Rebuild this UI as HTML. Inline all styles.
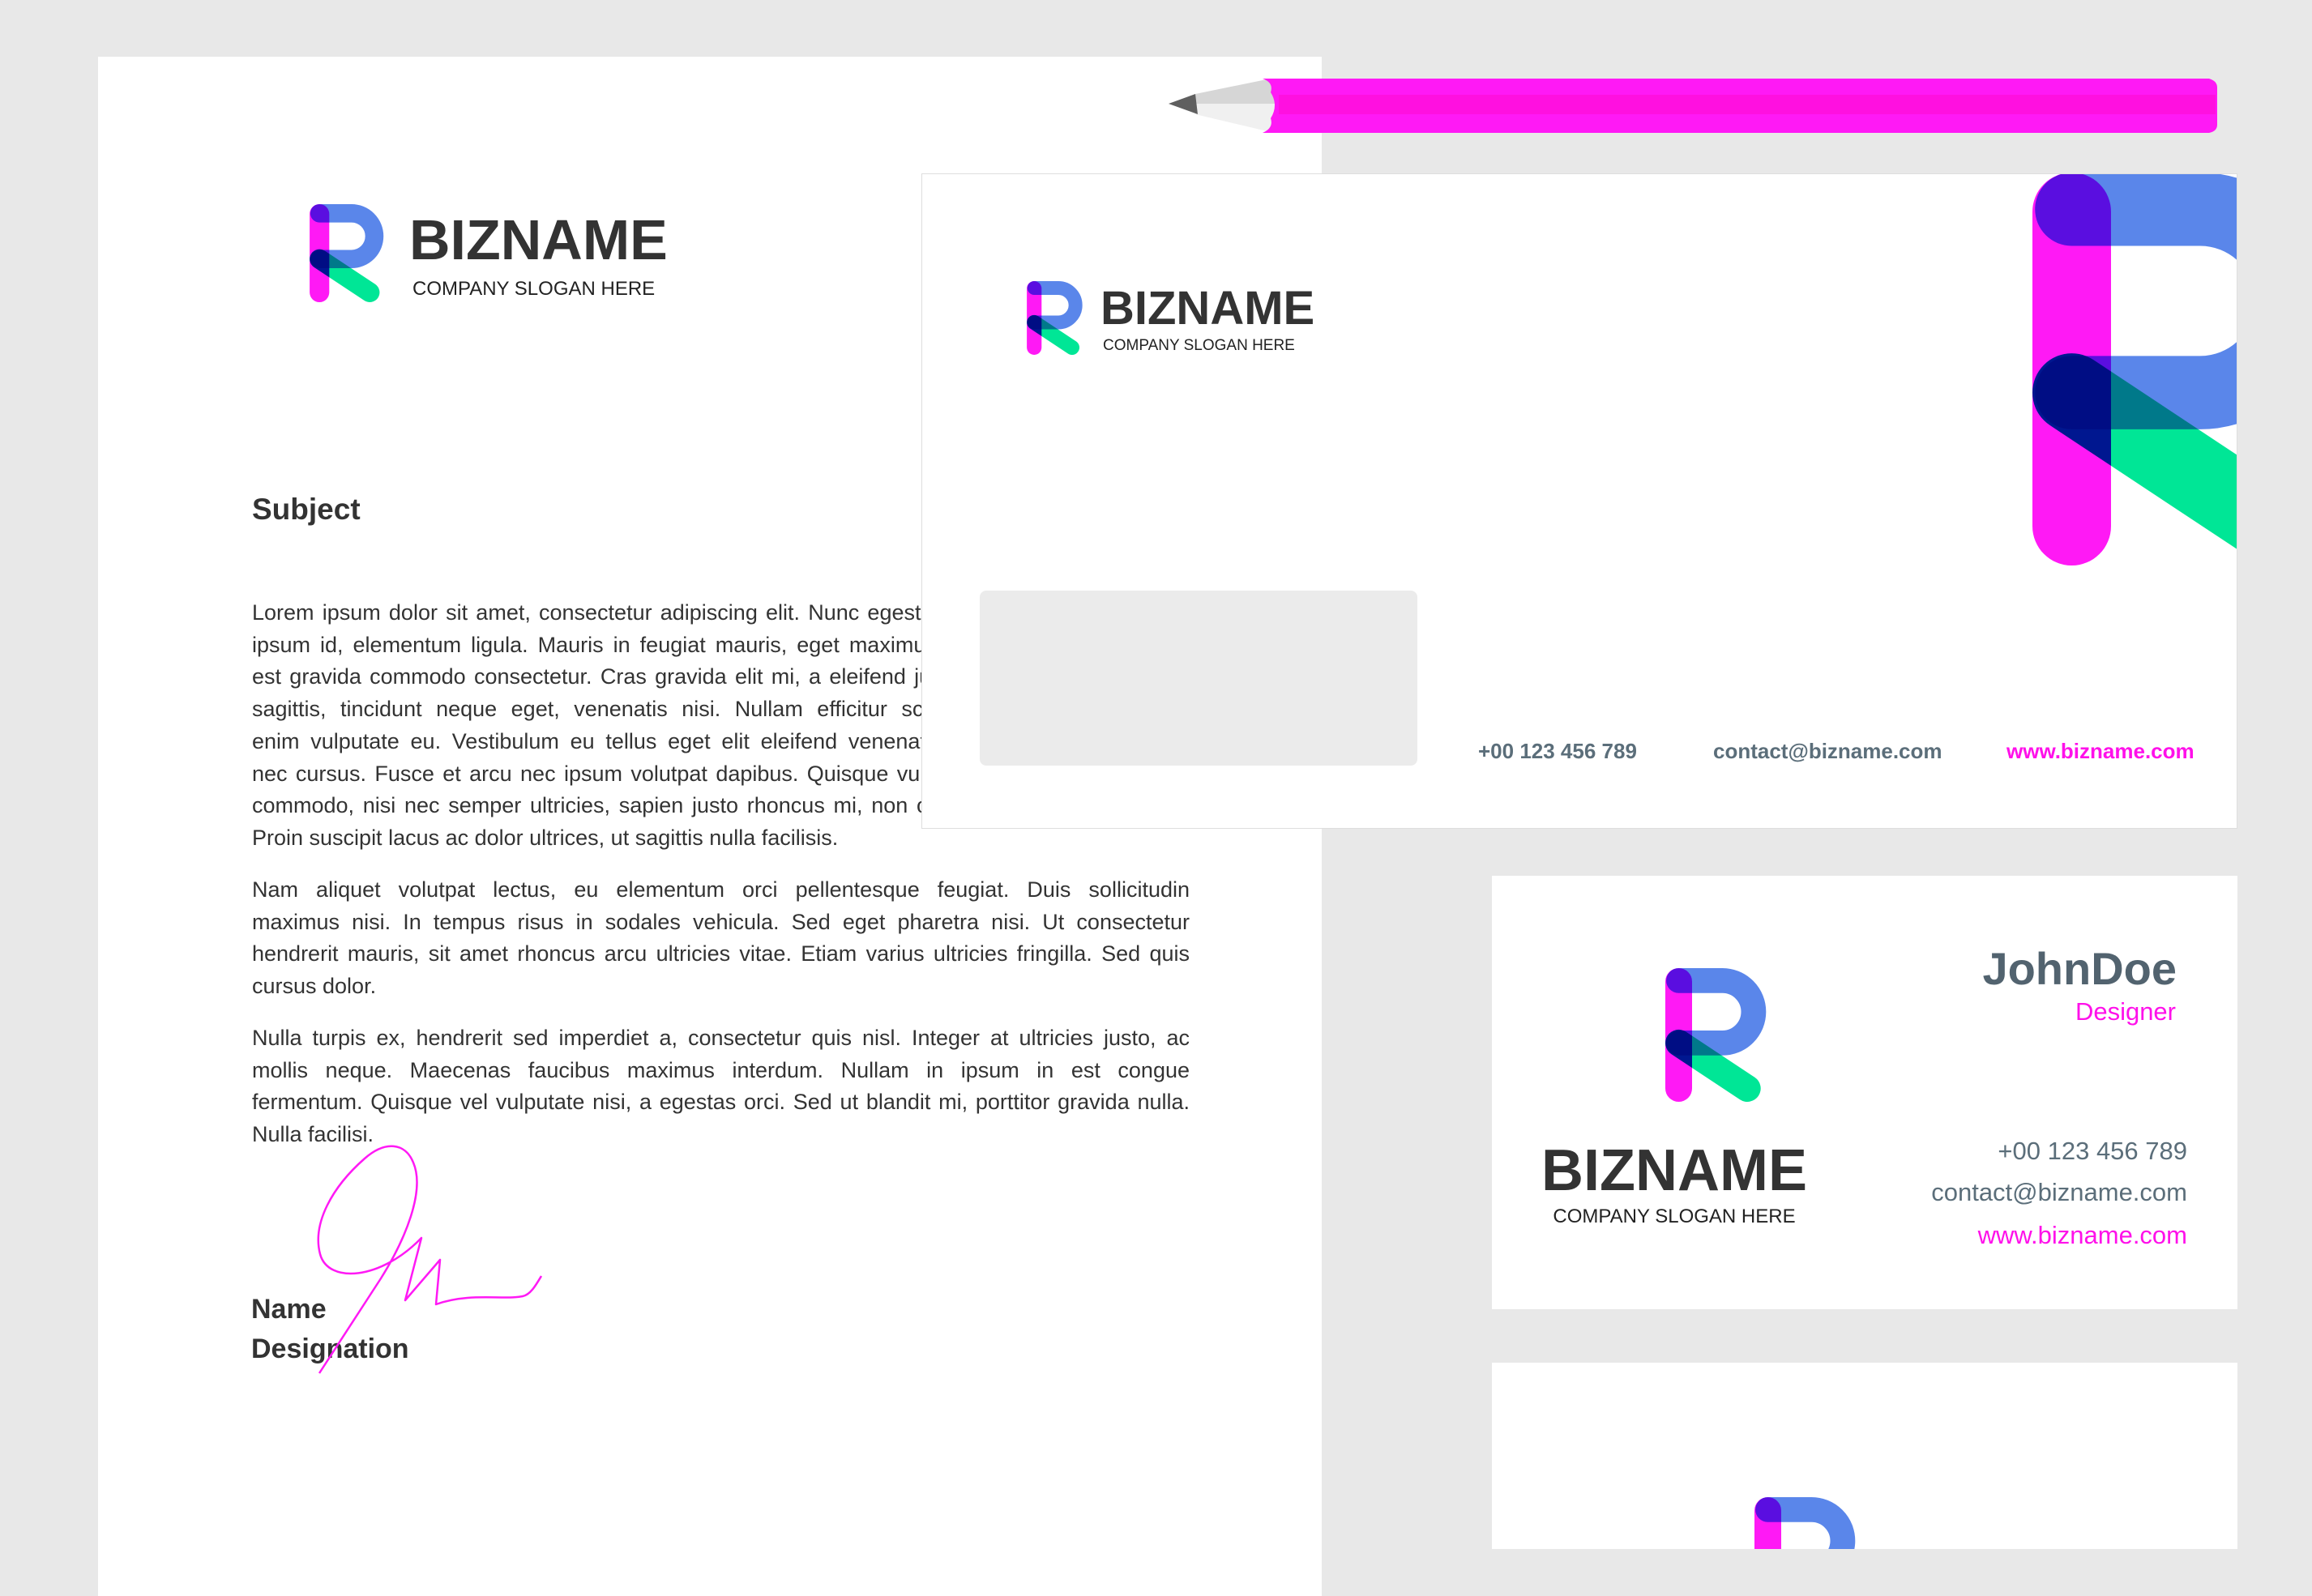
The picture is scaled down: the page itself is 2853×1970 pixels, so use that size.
<!DOCTYPE html>
<html><head><meta charset="utf-8">
<style>
*{margin:0;padding:0;box-sizing:border-box}
body{width:2853px;height:1902px;background:#e8e8e8;position:relative;overflow:hidden;font-family:"Liberation Sans",Arial,sans-serif;color:#333}
.abs{position:absolute;white-space:nowrap;line-height:1}
.sheet{position:absolute;left:121px;top:70px;width:1510px;height:1900px;background:#fff}
.env{position:absolute;left:1137px;top:214px;width:1624px;height:809px;background:#fff;border:1px solid #dedede;overflow:hidden}
.card{position:absolute;left:1841px;width:920px;background:#fff;overflow:hidden}
.body{position:absolute;left:311px;width:1157px;font-size:27px;line-height:39.7px;color:#333}
.body div{text-align:justify;text-align-last:justify;white-space:nowrap;overflow:visible}
.body div.l{text-align-last:left}
svg.logo{isolation:isolate}
svg.logo .s{mix-blend-mode:multiply}
</style></head><body>

<div class="sheet"></div>

<!-- pencil -->
<svg class="abs" style="left:1430px;top:90px" width="1320" height="85" viewBox="1430 90 1320 85">
<polygon points="1475,116 1568,97 1580,128 1475,128" fill="#d6d6d6"/>
<polygon points="1475,128 1580,128 1568,163 1475,141" fill="#f0f0f0"/>
<polygon points="1442,128 1475,116 1478,141" fill="#5f5f5f"/>
<path d="M1558,97 H2726 Q2736,100 2736,108 V154 Q2736,162 2726,164 H1558 Q1572,158 1568,146 Q1578,130 1568,114 Q1572,102 1558,97Z" fill="#ff19f5"/>
<rect x="1578" y="117" width="1156" height="24" fill="#ff10e0"/>
</svg>

<!-- letterhead content -->
<svg class="logo abs" style="left:382px;top:252px" width="97" height="121" viewBox="0 0 120 150">
<line class="s" x1="15" y1="15" x2="15" y2="135" stroke="#ff19f5" stroke-width="30" stroke-linecap="round"/>
<path class="s" d="M15,14 H64 A35,35 0 0 1 64,84 H15" fill="none" stroke="#5a86ea" stroke-width="28" stroke-linecap="round"/>
<line class="s" x1="15" y1="84" x2="92" y2="135" stroke="#00e696" stroke-width="30" stroke-linecap="round"/>
</svg>
<div class="abs" style="left:505px;top:261px;font-size:70px;font-weight:bold;color:#333">BIZNAME</div>
<div class="abs" style="left:509px;top:345px;font-size:24px;color:#222">COMPANY SLOGAN HERE</div>
<div class="abs" style="left:311px;top:610px;font-size:37px;font-weight:bold;color:#333">Subject</div>

<div class="body" style="top:737px">
<div>Lorem ipsum dolor sit amet, consectetur adipiscing elit. Nunc egestas lorem sit amet dui porta</div>
<div>ipsum id, elementum ligula. Mauris in feugiat mauris, eget maximus nulla. Aliquam erat volut</div>
<div>est gravida commodo consectetur. Cras gravida elit mi, a eleifend justo tempus non. Donec at</div>
<div>sagittis, tincidunt neque eget, venenatis nisi. Nullam efficitur scelerisque nisl, id posuere</div>
<div>enim vulputate eu. Vestibulum eu tellus eget elit eleifend venenatis. Aenean at arcu lacinia</div>
<div>nec cursus. Fusce et arcu nec ipsum volutpat dapibus. Quisque vulputate ante at dolor auctor</div>
<div>commodo, nisi nec semper ultricies, sapien justo rhoncus mi, non ornare libero felis vel lorem</div>
<div class="l">Proin suscipit lacus ac dolor ultrices, ut sagittis nulla facilisis.</div>
</div>
<div class="body" style="top:1079px">
<div>Nam aliquet volutpat lectus, eu elementum orci pellentesque feugiat. Duis sollicitudin</div>
<div>maximus nisi. In tempus risus in sodales vehicula. Sed eget pharetra nisi. Ut consectetur</div>
<div>hendrerit mauris, sit amet rhoncus arcu ultricies vitae. Etiam varius ultricies fringilla. Sed quis</div>
<div class="l">cursus dolor.</div>
</div>
<div class="body" style="top:1262px">
<div>Nulla turpis ex, hendrerit sed imperdiet a, consectetur quis nisl. Integer at ultricies justo, ac</div>
<div>mollis neque. Maecenas faucibus maximus interdum. Nullam in ipsum in est congue</div>
<div>fermentum. Quisque vel vulputate nisi, a egestas orci. Sed ut blandit mi, porttitor gravida nulla.</div>
<div class="l">Nulla facilisi.</div>
</div>

<div class="abs" style="left:310px;top:1599px;font-size:34px;font-weight:bold;color:#333">Name</div>
<div class="abs" style="left:310px;top:1648px;font-size:34px;font-weight:bold;color:#333">Designation</div>
<svg class="abs" style="left:0;top:0" width="900" height="1800" viewBox="0 0 900 1800">
<path d="M394,1695 L470,1578 C500,1530 525,1470 510,1435 C500,1410 475,1408 450,1430 C410,1465 385,1510 395,1548 C405,1585 470,1580 520,1528 L500,1605 L543,1555 L538,1610 C580,1595 620,1605 645,1600 C655,1598 662,1585 668,1575" fill="none" stroke="#ff19f5" stroke-width="2.5" stroke-linejoin="round"/>
</svg>

<!-- envelope -->
<div class="env">
<svg class="logo abs" style="left:129px;top:132px" width="73" height="91" viewBox="0 0 120 150">
<line class="s" x1="15" y1="15" x2="15" y2="135" stroke="#ff19f5" stroke-width="30" stroke-linecap="round"/>
<path class="s" d="M15,14 H64 A35,35 0 0 1 64,84 H15" fill="none" stroke="#5a86ea" stroke-width="28" stroke-linecap="round"/>
<line class="s" x1="15" y1="84" x2="92" y2="135" stroke="#00e696" stroke-width="30" stroke-linecap="round"/>
</svg>
<div class="abs" style="left:220px;top:137px;font-size:58px;font-weight:bold;color:#333">BIZNAME</div>
<div class="abs" style="left:223px;top:202px;font-size:19px;color:#222">COMPANY SLOGAN HERE</div>
<div style="position:absolute;left:71px;top:514px;width:540px;height:216px;background:#ebebeb;border-radius:8px"></div>
<svg class="logo abs" style="left:1370px;top:-2px" width="388" height="485" viewBox="0 0 120 150">
<line class="s" x1="15" y1="15" x2="15" y2="135" stroke="#ff19f5" stroke-width="30" stroke-linecap="round"/>
<path class="s" d="M15,14 H64 A35,35 0 0 1 64,84 H15" fill="none" stroke="#5a86ea" stroke-width="28" stroke-linecap="round"/>
<line class="s" x1="15" y1="84" x2="92" y2="135" stroke="#00e696" stroke-width="30" stroke-linecap="round"/>
</svg>
<div class="abs" style="left:686px;top:699px;font-size:26px;font-weight:bold;color:#5b6e7a">+00 123 456 789</div>
<div class="abs" style="left:976px;top:699px;font-size:26px;font-weight:bold;color:#5b6e7a">contact@bizname.com</div>
<div class="abs" style="left:1338px;top:699px;font-size:26px;font-weight:bold;color:#ff10ea">www.bizname.com</div>
</div>

<!-- business card -->
<div class="card" style="top:1081px;height:535px">
<svg class="logo abs" style="left:214px;top:114px" width="132" height="165" viewBox="0 0 120 150">
<line class="s" x1="15" y1="15" x2="15" y2="135" stroke="#ff19f5" stroke-width="30" stroke-linecap="round"/>
<path class="s" d="M15,14 H64 A35,35 0 0 1 64,84 H15" fill="none" stroke="#5a86ea" stroke-width="28" stroke-linecap="round"/>
<line class="s" x1="15" y1="84" x2="92" y2="135" stroke="#00e696" stroke-width="30" stroke-linecap="round"/>
</svg>
<div class="abs" style="left:0;width:450px;text-align:center;top:328px;font-size:72px;font-weight:bold;color:#333">BIZNAME</div>
<div class="abs" style="left:0;width:450px;text-align:center;top:409px;font-size:24px;color:#222">COMPANY SLOGAN HERE</div>
<div class="abs" style="right:75px;top:87px;font-size:56px;font-weight:bold;color:#52636f">JohnDoe</div>
<div class="abs" style="right:76px;top:152px;font-size:31px;color:#ff10ea">Designer</div>
<div class="abs" style="right:62px;top:324px;font-size:31px;color:#5b6e7a">+00 123 456 789</div>
<div class="abs" style="right:62px;top:375px;font-size:31px;color:#5b6e7a">contact@bizname.com</div>
<div class="abs" style="right:62px;top:428px;font-size:31px;color:#ff10ea">www.bizname.com</div>
</div>
<div class="card" style="top:1682px;height:230px">
<svg class="logo abs" style="left:324px;top:166px" width="132" height="165" viewBox="0 0 120 150">
<line class="s" x1="15" y1="15" x2="15" y2="135" stroke="#ff19f5" stroke-width="30" stroke-linecap="round"/>
<path class="s" d="M15,14 H64 A35,35 0 0 1 64,84 H15" fill="none" stroke="#5a86ea" stroke-width="28" stroke-linecap="round"/>
<line class="s" x1="15" y1="84" x2="92" y2="135" stroke="#00e696" stroke-width="30" stroke-linecap="round"/>
</svg>
</div>
</body></html>
